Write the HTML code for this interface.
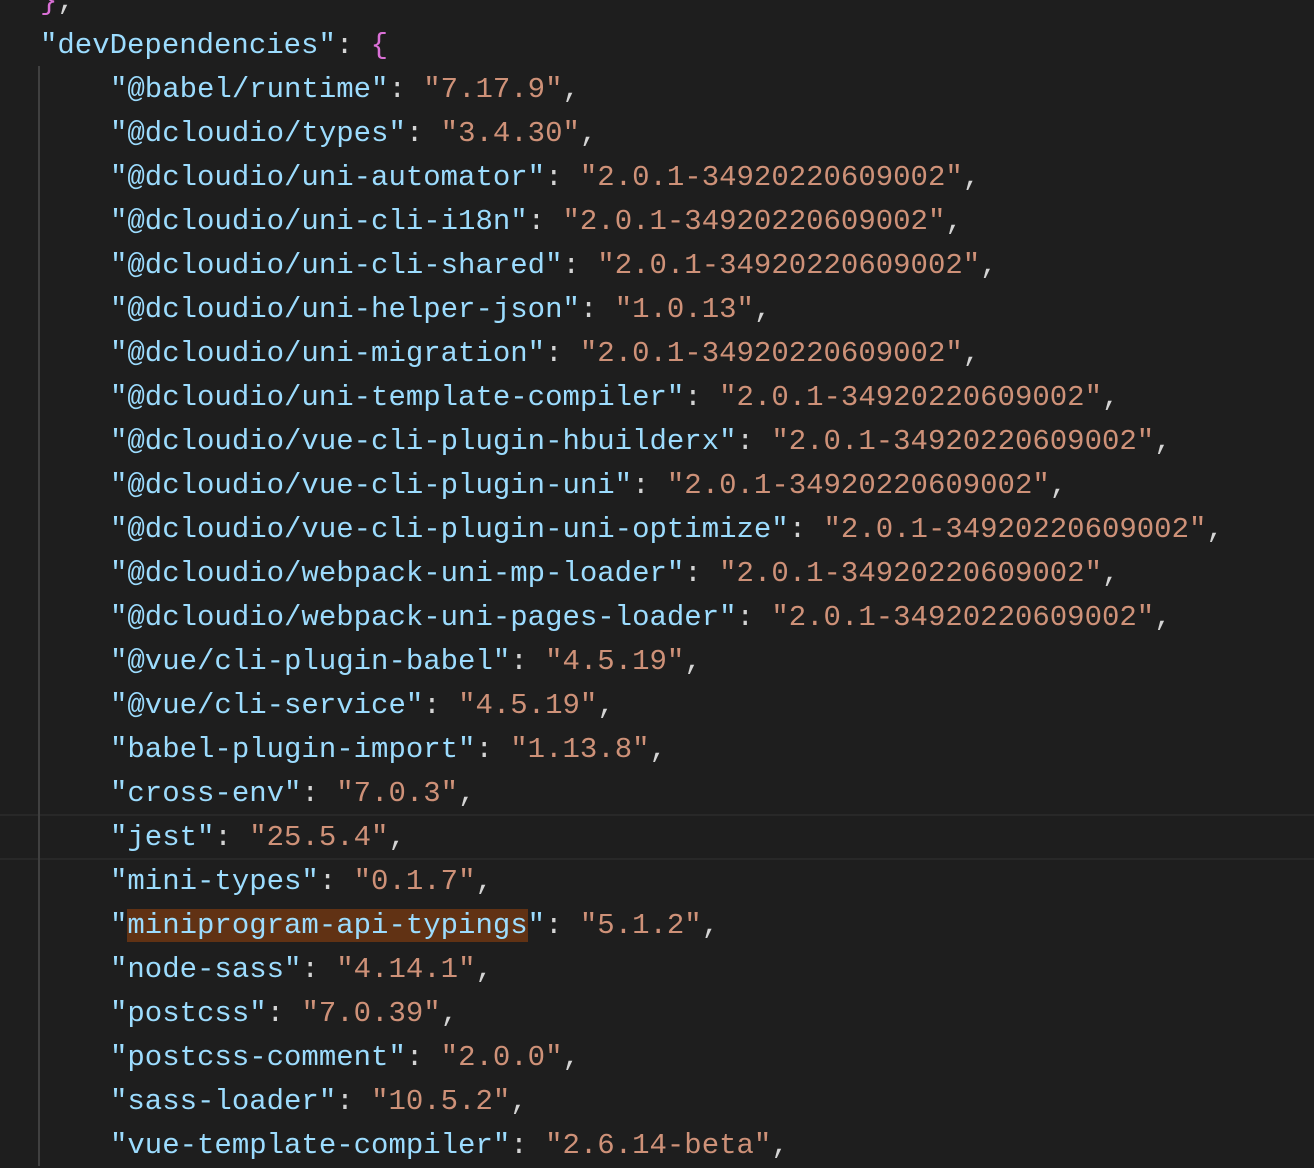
<!DOCTYPE html>
<html><head><meta charset="utf-8"><style>
html,body{margin:0;padding:0;background:#1e1e1e;width:1314px;height:1134px;overflow:hidden}
.ed{position:absolute;left:0;top:-20px;width:1314px;font-family:"Liberation Mono",monospace;font-size:29px;line-height:44px;color:#d4d4d4}
.l{height:44px;padding-left:40px;position:relative;white-space:pre}
.in{padding-left:110px}
.k{color:#9cdcfe}.s{color:#ce9178}.b{color:#da70d6}
.hl{background:#613214}
.cur{position:absolute;left:0;top:814px;width:1314px;height:42px;border-top:2px solid #282828;border-bottom:2px solid #282828}
.guide{position:absolute;left:38px;top:66px;width:2px;height:1100px;background:#404040}
</style></head><body>
<div class="cur"></div>
<div class="guide"></div>
<div class="ed"><div class="l"><span class="b">}</span>,</div><div class="l"><span class="k">"devDependencies"</span>: <span class="b">{</span></div><div class="l in"><span class="k">"@babel/runtime"</span>: <span class="s">"7.17.9"</span>,</div><div class="l in"><span class="k">"@dcloudio/types"</span>: <span class="s">"3.4.30"</span>,</div><div class="l in"><span class="k">"@dcloudio/uni-automator"</span>: <span class="s">"2.0.1-34920220609002"</span>,</div><div class="l in"><span class="k">"@dcloudio/uni-cli-i18n"</span>: <span class="s">"2.0.1-34920220609002"</span>,</div><div class="l in"><span class="k">"@dcloudio/uni-cli-shared"</span>: <span class="s">"2.0.1-34920220609002"</span>,</div><div class="l in"><span class="k">"@dcloudio/uni-helper-json"</span>: <span class="s">"1.0.13"</span>,</div><div class="l in"><span class="k">"@dcloudio/uni-migration"</span>: <span class="s">"2.0.1-34920220609002"</span>,</div><div class="l in"><span class="k">"@dcloudio/uni-template-compiler"</span>: <span class="s">"2.0.1-34920220609002"</span>,</div><div class="l in"><span class="k">"@dcloudio/vue-cli-plugin-hbuilderx"</span>: <span class="s">"2.0.1-34920220609002"</span>,</div><div class="l in"><span class="k">"@dcloudio/vue-cli-plugin-uni"</span>: <span class="s">"2.0.1-34920220609002"</span>,</div><div class="l in"><span class="k">"@dcloudio/vue-cli-plugin-uni-optimize"</span>: <span class="s">"2.0.1-34920220609002"</span>,</div><div class="l in"><span class="k">"@dcloudio/webpack-uni-mp-loader"</span>: <span class="s">"2.0.1-34920220609002"</span>,</div><div class="l in"><span class="k">"@dcloudio/webpack-uni-pages-loader"</span>: <span class="s">"2.0.1-34920220609002"</span>,</div><div class="l in"><span class="k">"@vue/cli-plugin-babel"</span>: <span class="s">"4.5.19"</span>,</div><div class="l in"><span class="k">"@vue/cli-service"</span>: <span class="s">"4.5.19"</span>,</div><div class="l in"><span class="k">"babel-plugin-import"</span>: <span class="s">"1.13.8"</span>,</div><div class="l in"><span class="k">"cross-env"</span>: <span class="s">"7.0.3"</span>,</div><div class="l in"><span class="k">"jest"</span>: <span class="s">"25.5.4"</span>,</div><div class="l in"><span class="k">"mini-types"</span>: <span class="s">"0.1.7"</span>,</div><div class="l in"><span class="k">"<span class="hl">miniprogram-api-typings</span>"</span>: <span class="s">"5.1.2"</span>,</div><div class="l in"><span class="k">"node-sass"</span>: <span class="s">"4.14.1"</span>,</div><div class="l in"><span class="k">"postcss"</span>: <span class="s">"7.0.39"</span>,</div><div class="l in"><span class="k">"postcss-comment"</span>: <span class="s">"2.0.0"</span>,</div><div class="l in"><span class="k">"sass-loader"</span>: <span class="s">"10.5.2"</span>,</div><div class="l in"><span class="k">"vue-template-compiler"</span>: <span class="s">"2.6.14-beta"</span>,</div></div>
</body></html>
